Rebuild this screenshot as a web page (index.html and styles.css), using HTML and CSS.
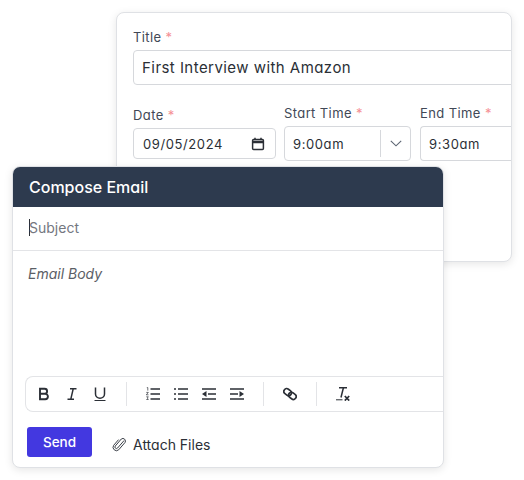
FILE: index.html
```html
<!DOCTYPE html>
<html>
    <head>
        <meta charset="utf-8">
        <title>Compose Email</title>
        <link rel="stylesheet" href="styles.css">
    </head>
    <body>
        <div class="event-card">
            <div class="field">
                <div class="label">Title <span class="req">*</span></div>
                <div class="input title-input">First Interview with Amazon</div>
            </div>
            <div class="time-row">
                <div class="field date-field">
                    <div class="label">Date <span class="req">*</span></div>
                    <div class="input date-input">
                        <span>09/05/2024</span>
                        <svg width="14" height="14" viewBox="0 0 14 14" fill="none" stroke="#2b2f36" stroke-width="1.5"><rect x="1.6" y="2.4" width="10.8" height="10" rx="1"/><path d="M1.600 5h10.800" stroke-width="2.400"/><path d="M4 .8v2M10 .8v2"/></svg>
                    </div>
                </div>
                <div class="field start-field">
                    <div class="label">Start Time <span class="req">*</span></div>
                    <div class="input time-input">
                        <span class="time-value">9:00am</span>
                        <span class="time-arrow">
                            <svg width="12" height="7" viewBox="0 0 12 7" fill="none" stroke="#5b6472" stroke-width="1.1"><path d="M.8.8 6 5.800 11.200.8"/></svg>
                        </span>
                    </div>
                </div>
                <div class="field end-field">
                    <div class="label">End Time <span class="req">*</span></div>
                    <div class="input time-input end-input">
                        <span class="time-value">9:30am</span>
                    </div>
                </div>
            </div>
        </div>

        <div class="email-card">
            <div class="email-header">Compose Email</div>
            <div class="subject-row"><span class="caret"></span>Subject</div>
            <div class="body-area">
                <div class="body-text">Email Body</div>
                <div class="toolbar">
                    <div class="tool-group">
                        <svg width="14" height="14" viewBox="0 0 14 14" fill="none" stroke="#2b2f36" stroke-width="1.9"><path d="M3 1.800h4.600a2.500 2.500 0 0 1 0 5H3zM3 6.800h5.200a2.700 2.700 0 0 1 0 5.400H3z"/></svg>
                        <svg width="14" height="14" viewBox="0 0 14 14" fill="none" stroke="#2b2f36" stroke-width="1.5"><path d="M5 1.800h6.500M2.500 12.200h6.500M8.200 1.800 5.800 12.200"/></svg>
                        <svg width="14" height="14" viewBox="0 0 14 14" fill="none" stroke="#2b2f36" stroke-width="1.5"><path d="M2.500 .5v6.600a4.500 4.200 0 0 0 9 0V.5"/><path d="M1.500 13.500h11" stroke-width="1"/></svg>
                    </div>
                    <div class="tool-group">
                        <svg width="14" height="14" viewBox="0 0 14 14" fill="none" stroke="#2b2f36"><path d="M4.500 2h9.500M4.500 7h9.500M4.500 12h9.500" stroke-width="1.500"/><path d="M.8.6h1v3M.3 5.400h2l-2 2.400h2.200M.3 9.800h2l-1 1.200 1 1.500H.3" stroke-width=".7"/></svg>
                        <svg width="14" height="14" viewBox="0 0 14 14" fill="none" stroke="#2b2f36" stroke-width="1.500"><path d="M4 2h10M4 7h10M4 12h10"/><path d="M0 2h2M0 7h2M0 12h2"/></svg>
                        <svg width="14" height="14" viewBox="0 0 14 14" fill="none" stroke="#2b2f36" stroke-width="1.500"><path d="M0 2h14M6 7h8M0 12h14"/><path d="M4.500 4v6L0 7z" fill="#2b2f36" stroke="none"/></svg>
                        <svg width="14" height="14" viewBox="0 0 14 14" fill="none" stroke="#2b2f36" stroke-width="1.500"><path d="M0 2h14M0 7h8M0 12h14"/><path d="M9.500 4v6L14 7z" fill="#2b2f36" stroke="none"/></svg>
                    </div>
                    <div class="tool-group">
                        <svg width="14" height="14" viewBox="0 0 14 14" fill="none" stroke="#2b2f36" stroke-width="1.700"><g transform="rotate(38 7 7)"><rect x="0" y="4.200" width="8" height="5.600" rx="2.800"/><rect x="6" y="4.200" width="8" height="5.600" rx="2.800"/></g></svg>
                    </div>
                    <div class="tool-group">
                        <svg width="14" height="14" viewBox="0 0 14 14" fill="none" stroke="#2b2f36"><path d="M3 .8h8" stroke-width="1.500"/><path d="M7.400.8 5 10.500" stroke-width="1.500"/><path d="M0 12.800h6.500" stroke-width="1"/><path d="M8.800 9l4.400 4.600M13.200 9l-4.400 4.600" stroke-width="1.700"/></svg>
                    </div>
                </div>
            </div>
            <div class="email-footer">
                <div class="send-btn">Send</div>
                <div class="attach">
                    <svg width="14" height="15" viewBox="0 0 14 15" fill="none" stroke="#3a3f47" stroke-width="1"><path d="M12.200 3.400 5.600 11a1.500 1.500 0 0 1-2.300-2l6-7a2.600 2.600 0 0 1 3.800 3.400l-6.400 7.400A3.400 3.400 0 0 1 1.600 8.400l5-5.800"/></svg>
                    <span>Attach Files</span>
                </div>
            </div>
        </div>
    </body>
</html>
```

FILE: styles.css
```css
html, body {
    margin: 0;
    padding: 0;
}
body {
    position: relative;
    width: 524px;
    height: 480px;
    overflow: hidden;
    background-color: #ffffff;
    font-family: Inter, "Liberation Sans", sans-serif;
    font-feature-settings: "cv11";
    color: #2b2f36;
}

/* the two floating windows */
.event-card {
    position: absolute;
    left: 116px;
    top: 12px;
    width: 396px;
    height: 250px;
    box-sizing: border-box;
    padding: 16px 0 0 16px;
    background-color: #ffffff;
    border: 1px solid #dfe1e5;
    border-radius: 8px;
    box-shadow: 0 2px 8px rgba(0, 0, 0, .1);
    overflow: hidden;
}
.email-card {
    position: absolute;
    left: 12px;
    top: 166px;
    width: 432px;
    height: 302px;
    box-sizing: border-box;
    display: flex;
    flex-direction: column;
    background-color: #ffffff;
    border: 1px solid #dfe1e5;
    border-radius: 8px;
    box-shadow: 0 2px 8px rgba(0, 0, 0, .1);
    overflow: hidden;
}

/* event form */
.label {
    font-size: 13px;
    line-height: 16px;
    letter-spacing: .4px;
    color: #414856;
    margin-bottom: 5px;
}
.req {
    color: #f58f94;
}
.input {
    box-sizing: border-box;
    display: flex;
    align-items: center;
    background-color: #ffffff;
    border: 1px solid #d6d8dc;
    border-radius: 4px;
    font-size: 13px;
    letter-spacing: .6px;
    color: #2b2f36;
}
.title-input {
    width: 400px;
    height: 35px;
    padding-left: 8px;
    font-size: 15px;
    letter-spacing: .45px;
}
.time-row {
    display: flex;
    align-items: flex-start;
    margin-top: 20px;
}
.date-field {
    flex: none;
    width: 143px;
    margin-right: 8px;
    padding-top: 2px;
}
.date-input {
    height: 31px;
    padding: 0 10px 0 9px;
    justify-content: space-between;
}
.start-field {
    flex: none;
    width: 127px;
    margin-right: 9px;
}
.end-field {
    flex: none;
    width: 120px;
}
.time-input {
    height: 35px;
}
.end-input {
    border-right: 0;
}
.time-value {
    flex: 1;
    padding-left: 8px;
}
.time-arrow {
    display: flex;
    align-items: center;
    justify-content: center;
    width: 29px;
    height: 27px;
    border-left: 1px solid #d6d8dc;
}

/* email */
.email-header {
    height: 40px;
    flex: none;
    display: flex;
    align-items: center;
    padding-left: 16px;
    background-color: #2d3a4e;
    color: #ffffff;
    font-size: 16px;
    font-weight: 500;
}
.subject-row {
    height: 44px;
    box-sizing: border-box;
    flex: none;
    display: flex;
    align-items: center;
    padding: 0 0 2px 16px;
    border-bottom: 1px solid #e3e4e7;
    font-size: 14px;
    color: #74777f;
}
.caret {
    width: 1px;
    height: 17px;
    background-color: #2b2f36;
    margin-right: -1px;
}
.body-area {
    height: 161px;
    flex: none;
    padding: 0 0 0 12px;
    display: flex;
    flex-direction: column;
    justify-content: space-between;
}
.body-text {
    padding: 14px 0 0 3px;
    font-size: 14px;
    line-height: 17px;
    font-style: italic;
    color: #5b5e66;
}
.toolbar {
    height: 36px;
    box-sizing: border-box;
    display: flex;
    align-items: center;
    border: 1px solid #e3e4e7;
    border-right: 0;
    border-radius: 8px 0 0 8px;
}
.tool-group {
    display: flex;
    align-items: center;
    gap: 14px;
    height: 24px;
    padding: 0 19px;
    border-right: 1px solid #e3e4e7;
}
.tool-group:first-child {
    padding-left: 11px;
}
.tool-group:last-child {
    border-right: 0;
}
.email-footer {
    display: flex;
    align-items: center;
    padding: 15px 0 0 14px;
}
.send-btn {
    width: 65px;
    height: 30px;
    display: flex;
    align-items: center;
    justify-content: center;
    background-color: #4338e0;
    border-radius: 3px;
    color: #ffffff;
    font-size: 13.500px;
    font-weight: 500;
}
.attach {
    display: flex;
    align-items: center;
    gap: 7px;
    margin-left: 20px;
    margin-top: 4px;
    font-size: 14px;
    color: #2b2f36;
}
```
